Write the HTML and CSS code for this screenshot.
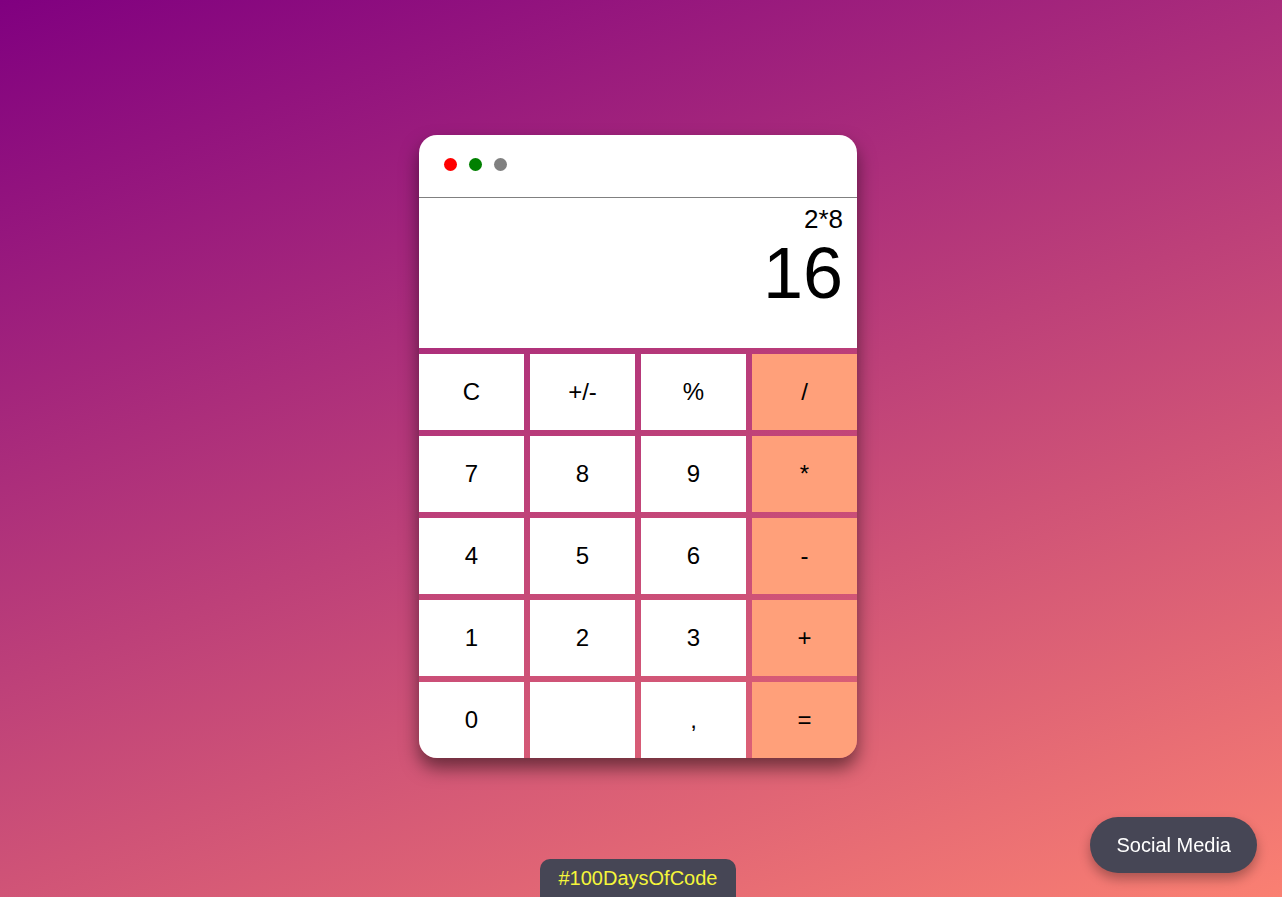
FILE: index.html
```html
<!DOCTYPE html>
<html lang="en">
<head>
<meta charset="utf-8">
<title>Calculator</title>
<link rel="stylesheet" href="styles.css">
</head>
<body>
<main class="page">
  <div class="calculator">
    <div class="titlebar">
      <span class="dot dot-red"></span>
      <span class="dot dot-green"></span>
      <span class="dot dot-gray"></span>
    </div>
    <div class="display">
      <div class="expression">2*8</div>
      <div class="result">16</div>
    </div>
    <div class="keys">
      <button class="key">C</button>
      <button class="key">+/-</button>
      <button class="key">%</button>
      <button class="key key-op">/</button>
      <button class="key">7</button>
      <button class="key">8</button>
      <button class="key">9</button>
      <button class="key key-op">*</button>
      <button class="key">4</button>
      <button class="key">5</button>
      <button class="key">6</button>
      <button class="key key-op">-</button>
      <button class="key">1</button>
      <button class="key">2</button>
      <button class="key">3</button>
      <button class="key key-op">+</button>
      <button class="key">0</button>
      <button class="key"></button>
      <button class="key">,</button>
      <button class="key key-op">=</button>
    </div>
  </div>
</main>
<div class="badge">#100DaysOfCode</div>
<button class="social">Social Media</button>
</body>
</html>
```

FILE: styles.css
```css
html, body {
  margin: 0;
  padding: 0;
  height: 100%;
}

body {
  font-family: "Liberation Sans", Arial, sans-serif;
  background: linear-gradient(160deg, #800080 0%, #fa8072 100%);
  overflow: hidden;
}

.page {
  box-sizing: border-box;
  height: 100%;
  display: flex;
  align-items: center;
  justify-content: center;
  padding-right: 6px;
  padding-bottom: 4px;
}

.calculator {
  width: 438px;
  border-radius: 18px;
  overflow: hidden;
  box-shadow: 0 10px 18px rgba(0, 0, 0, 0.5);
}

.titlebar {
  height: 63px;
  background: #fff;
  border-bottom: 1px solid #808080;
  display: flex;
  align-items: center;
  gap: 12px;
  padding-left: 25px;
  padding-bottom: 2px;
  box-sizing: border-box;
}

.dot {
  width: 13px;
  height: 13px;
  border-radius: 50%;
}

.dot-red { background: #ff0000; }
.dot-green { background: #008000; }
.dot-gray { background: #808080; }

.display {
  height: 150px;
  background: #fff;
  box-sizing: border-box;
  padding: 6px 14px 0 0;
  text-align: right;
  color: #000;
}

.expression {
  font-size: 26px;
  line-height: 30px;
}

.result {
  font-size: 72px;
  line-height: 60px;
  margin-top: 9px;
}

.keys {
  display: grid;
  grid-template-columns: repeat(4, 1fr);
  grid-auto-rows: 76.2px;
  gap: 6px;
  padding-top: 6px;
}

.key {
  border: none;
  margin: 0;
  padding: 0;
  background: #fff;
  color: #000;
  font-family: "Liberation Sans", Arial, sans-serif;
  font-size: 24px;
}

.key-op {
  background: #ffa07a;
}

.badge {
  position: fixed;
  left: 540px;
  bottom: 0;
  width: 196px;
  box-sizing: border-box;
  padding: 8px 0 7px;
  text-align: center;
  background: #464655;
  color: #f5f53a;
  font-size: 20px;
  line-height: 23px;
  border-radius: 10px 10px 0 0;
}

.social {
  position: fixed;
  right: 25px;
  bottom: 24px;
  height: 56px;
  padding: 0 26px;
  border: none;
  border-radius: 28px;
  background: #464655;
  color: #fff;
  font-family: "Liberation Sans", Arial, sans-serif;
  font-size: 20px;
  box-shadow: 0 6px 12px rgba(0, 0, 0, 0.3);
}
```
